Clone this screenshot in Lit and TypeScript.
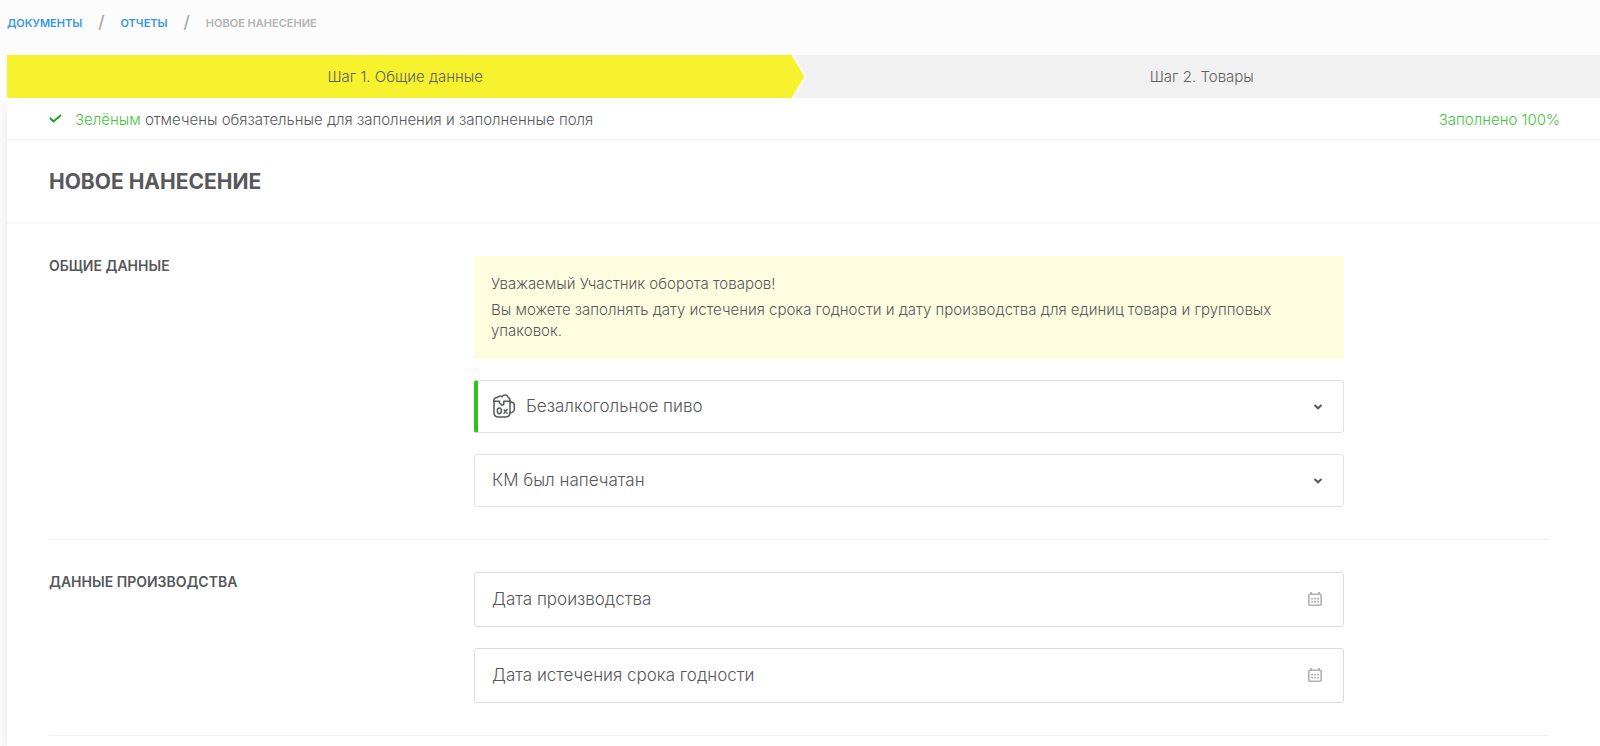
import { LitElement, html, css, svg } from "lit";
import { customElement, property } from "lit/decorators.js";

const calendarIcon = html`<svg class="calendar" viewBox="0 0 14 14" width="14" height="14" aria-hidden="true">
  <path d="M3 0v3M11 0v3" stroke="#b0b0b0" stroke-width="1.8" />
  <rect x="0.8" y="2.2" width="12.4" height="11" rx="1.2" fill="none" stroke="#b0b0b0" stroke-width="1.6" />
  ${[3.2, 6.2, 9.2].map((x) => [5.8, 8.8].map((y) => svg`<rect x=${x} y=${y} width="1.7" height="1.7" fill="#a8a8a8" />`))}
</svg>`;

const beerIcon = html`<svg class="lead" viewBox="0 0 22 24" width="22" height="24" aria-hidden="true" fill="none" stroke="#56585c" stroke-width="1.5" stroke-linecap="round" stroke-linejoin="round">
  <path d="M1 7V18.500q0 4.500 4.500 4.500h7q4.500 0 4.500-4.500V7" />
  <path d="M1 7.500C0.300 4.500 2.500 3 4.500 3.500C5.500 1.800 8 1.800 9 2.800C10.500 0.300 14.500 0.500 15 3.200C17 4 17.300 5.500 17 7.300" />
  <path d="M1 7.300H6.500V9Q7.800 9.200 8.500 11Q10 11.800 10.800 10V7.300H17" />
  <path d="M17 8h1.500q2.800 0.500 2.800 3v4q0 3-2.500 3.500L17 18.800" />
  <ellipse cx="6.300" cy="16.800" rx="2" ry="2.900" />
  <path d="M11 19.300l3.200-3.800M11.200 16l0.400 0.400M13.800 18.800l0.300 0.300" />
</svg>`;

@customElement("select-field")
class SelectField extends LitElement {
  @property() label = "";
  @property() value = "";
  @property({ type: Boolean }) filled = false;
  @property({ type: Boolean }) beer = false;

  static styles = css`
    :host { display: block; }
    .field { position: relative; display: block; }
    .select {
      appearance: none;
      box-sizing: border-box;
      display: block;
      width: 100%;
      height: 53px;
      padding: 0 48px 2px 17px;
      border: 1px solid #e2e2e2;
      border-radius: 3px;
      background: #fff;
      color: #56585c;
      font: 300 17px/24px Inter, sans-serif;
    }
    .filled .select { border-left: 4px solid #2fc41a; padding-left: 48px; }
    .lead { position: absolute; left: 19px; top: 14px; }
    .arrow { position: absolute; right: 21px; top: 23px; pointer-events: none; }
  `;

  render() {
    return html`<div class="field ${this.filled ? "filled" : ""}">
      <select class="select" aria-label=${this.label}><option>${this.value}</option></select>
      ${this.beer ? beerIcon : ""}
      <svg class="arrow" viewBox="0 0 10 8" width="10" height="8" aria-hidden="true">
        <path d="M1.500 2L5 5.300L8.500 2" fill="none" stroke="#56585c" stroke-width="2" />
      </svg>
    </div>`;
  }
}

@customElement("date-field")
class DateField extends LitElement {
  @property() label = "";

  static styles = css`
    :host { display: block; }
    .field { position: relative; display: block; }
    .input {
      box-sizing: border-box;
      display: block;
      width: 100%;
      height: 55px;
      padding: 0 48px 1px 17px;
      border: 1px solid #dcdcdc;
      border-radius: 3px;
      background: #fff;
      color: #56585c;
      font: 300 17px/24px Inter, sans-serif;
    }
    .input::placeholder { color: #56585c; opacity: 1; }
    .calendar { position: absolute; right: 22px; top: 20px; }
  `;

  render() {
    return html`<div class="field">
      <input class="input" type="text" aria-label=${this.label} placeholder=${this.label} />
      ${calendarIcon}
    </div>`;
  }
}

@customElement("app-root")
class AppRoot extends LitElement {
  static styles = css`
    :host {
      display: block;
      height: 100vh;
      overflow: hidden;
      background: #fcfcfc;
      color: #56585c;
      font: 300 15px/21px Inter, sans-serif;
    }
    .page { padding-left: 7px; }
    .crumbs {
      display: flex;
      align-items: center;
      height: 55px;
      padding-bottom: 8px;
      box-sizing: border-box;
      font-size: 11px;
      font-weight: 600;
      text-transform: uppercase;
      color: #b3b3b3;
    }
    .crumb { color: #3797e4; text-decoration: none; }
    .slash { padding: 0 16px 3px; font-size: 17px; font-weight: 500; color: #a5a5a5; }
    .steps { display: grid; grid-template-columns: 1fr 1fr; background: #f1f1f1; }
    .step {
      height: 43px;
      border: 0;
      padding: 0 0 1px;
      background: none;
      color: #5f6163;
      font: 300 15px/21px Inter, sans-serif;
    }
    .active { position: relative; z-index: 0; }
    .active::before, .active::after {
      content: "";
      position: absolute;
      inset: 0;
      z-index: -1;
      background: #fff;
      clip-path: polygon(0 0, calc(100% - 13px) 0, 100% 50%, calc(100% - 13px) 100%, 0 100%);
    }
    .active::after { right: -1px; background: #f6f32e; }
    .active::before { right: -3px; }
    .card {
      position: relative;
      background: #fff;
      box-shadow: 0 4px 12px rgba(0, 0, 0, 0.08);
      clip-path: inset(0 0 0 -7px);
      min-height: calc(100vh - 98px);
    }
    .status {
      display: flex;
      align-items: center;
      height: 41px;
      padding: 2px 40px 0 42px;
      box-sizing: border-box;
    }
    .check { margin: 0 13px 2px 0; }
    .green { color: #45c43c; }
    .percent { margin-left: auto; }
    .head { padding: 27px 42px 25px; border-top: 1px solid #f1f1f1; border-bottom: 2px solid #f7f7f7; }
    .title { margin: 0; font-size: 21px; line-height: 30px; font-weight: 700; text-transform: uppercase; }
    .sections { padding: 0 50px 0 42px; }
    .section {
      display: grid;
      grid-template-columns: 425fr 870fr 206fr;
      padding: 32px 0;
      border-bottom: 1px solid #f3f3f3;
    }
    .name { margin: 0; font-size: 14px; line-height: 20px; font-weight: 600; text-transform: uppercase; }
    .fields { display: grid; gap: 21px; }
    .notice { padding: 17px 17px 18px; background: #fffde0; }
    .line { margin: 0 0 5px; }
    .line:last-child { margin: 0; }
  `;

  render() {
    return html`<div class="page">
      <nav class="crumbs">
        <a class="crumb" href="#documents">Документы</a><span class="slash">/</span>
        <a class="crumb" href="#reports">Отчеты</a><span class="slash">/</span>
        <span>Новое нанесение</span>
      </nav>
      <div class="steps">
        <button class="step active">Шаг 1. Общие данные</button>
        <button class="step">Шаг 2. Товары</button>
      </div>
      <main class="card">
        <div class="status">
          <svg class="check" viewBox="0 0 13 10" width="13" height="10" aria-hidden="true">
            <path d="M1 4L4.500 7.500L12 1" fill="none" stroke="#1ea51e" stroke-width="2" />
          </svg>
          <span><span class="green">Зелёным</span> отмечены обязательные для заполнения и заполненные поля</span>
          <span class="green percent">Заполнено 100%</span>
        </div>
        <header class="head"><h1 class="title">Новое нанесение</h1></header>
        <form class="sections">
          <section class="section">
            <h2 class="name">Общие данные</h2>
            <div class="fields">
              <div class="notice">
                <p class="line">Уважаемый Участник оборота товаров!</p>
                <p class="line">Вы можете заполнять дату истечения срока годности и дату производства для единиц товара и групповых упаковок.</p>
              </div>
              <select-field label="Товарная группа" value="Безалкогольное пиво" filled beer></select-field>
              <select-field label="Способ нанесения" value="КМ был напечатан"></select-field>
            </div>
          </section>
          <section class="section">
            <h2 class="name">Данные производства</h2>
            <div class="fields">
              <date-field label="Дата производства"></date-field>
              <date-field label="Дата истечения срока годности"></date-field>
            </div>
          </section>
        </form>
      </main>
    </div>`;
  }
}
